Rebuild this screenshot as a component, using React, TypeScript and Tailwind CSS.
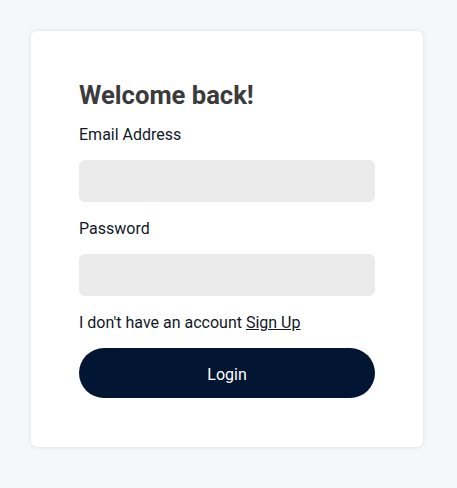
export default function App() {
  return (
    <div
      className="min-h-[488px] bg-[#f6f7f9] pt-[31px] pl-[31px]"
      style={{ fontFamily: 'Roboto, "Liberation Sans", sans-serif' }}
    >
      <div className="w-[392px] h-[416px] bg-white rounded-md shadow-[0_0_4px_rgba(0,0,0,0.12)] px-12 pt-12">
        <h1 className="text-[25.6px] leading-[32px] font-bold text-[#3b3b3b]">Welcome back!</h1>
        <div className="flex flex-col text-base leading-6 text-[#111827]">
          <label className="mt-3">Email Address</label>
          <div className="mt-[13px] h-[42px] rounded-md bg-[#ebebeb]" />
          <label className="mt-[15px]">Password</label>
          <div className="mt-[13px] h-[42px] rounded-md bg-[#ebebeb]" />
          <p className="mt-[15px]">
            I don't have an account <a className="underline">Sign Up</a>
          </p>
          <button className="mt-[13px] h-[50px] pt-[3px] rounded-full bg-[#021533] text-white">Login</button>
        </div>
      </div>
    </div>
  );
}
